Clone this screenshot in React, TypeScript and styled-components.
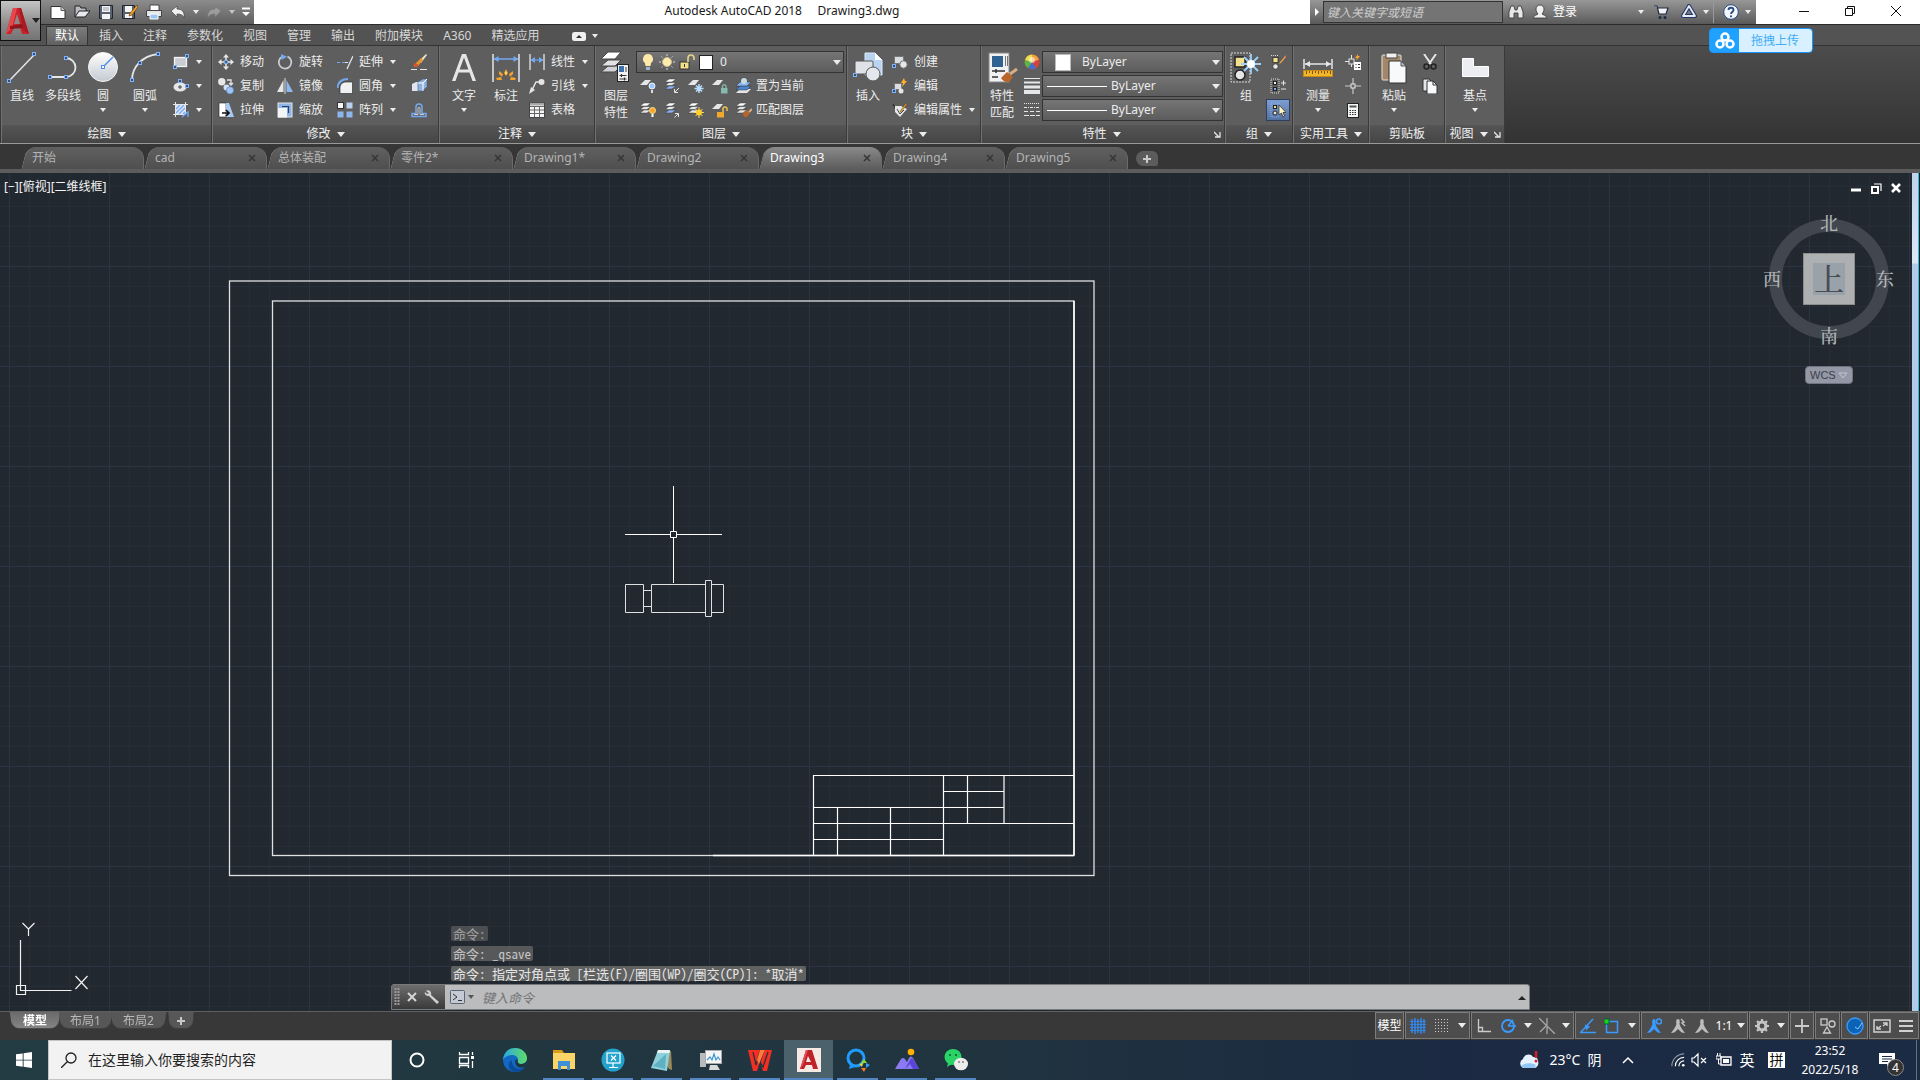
import React from 'react';
import styled, { createGlobalStyle, css } from 'styled-components';

const UI_FONT = '"Noto Sans", "Noto Sans CJK SC", sans-serif';
const MONO_FONT = '"Noto Sans Mono CJK SC", "Liberation Mono", "Noto Sans CJK SC", monospace';
const W = '#e4e6e8';
const B = '#74a9f2';

const Global = createGlobalStyle`
  * { box-sizing: border-box; }
  body { margin: 0; background: #383838; overflow: hidden; }
  button, input, select { font: inherit; color: inherit; }
`;

const Screen = styled.div`
  display: flex;
  flex-direction: column;
  height: 100vh;
  font: 12px/16px ${UI_FONT};
  color: #ececec;
  background: #383838;
`;

const plainButton = css`
  border: 0;
  padding: 0;
  margin: 0;
  background: none;
  display: flex;
  align-items: center;
  white-space: nowrap;
`;

const Icon = styled.svg`
  flex: none;
  display: block;
`;

const Caret = styled.span<{ $s?: number; $c?: string }>`
  flex: none;
  display: block;
  width: 0;
  height: 0;
  border: ${p => p.$s ?? 3}px solid transparent;
  border-top: ${p => (p.$s ?? 3) + 1}px solid ${p => p.$c ?? '#ececec'};
  border-bottom: 0;
`;

/* ---------- icons ---------- */

type IconProps = { children: React.ReactNode; w?: number; h?: number; box?: string };
const S = ({ children, w = 16, h, box }: IconProps) => (
  <Icon width={w} height={h ?? w} viewBox={box ?? `0 0 ${w} ${h ?? w}`} fill="none" aria-hidden="true">
    {children}
  </Icon>
);

const Node = ({ x, y }: { x: number; y: number }) => (
  <rect x={x - 1.5} y={y - 1.5} width="3" height="3" fill="#3d4e68" stroke="#7db3ff" />
);
const Sheets = ({ x = 0, y = 0, blue = false }: { x?: number; y?: number; blue?: boolean }) => (
  <g transform={`translate(${x} ${y})`} stroke="#3a3a3a" strokeWidth=".5">
    <path d="M0 11l4-3h7l-4 3z" fill={blue ? '#86b5f5' : W} />
    <path d="M0 7.5l4-3h7l-4 3z" fill={W} />
    <path d="M0 4l4-3h7l-4 3z" fill="#fff" />
  </g>
);
const Sheet = () => <path d="M0 7l5-5h6l-4 5z" fill={W} />;

const big = {
  line: <S w={34}><path d="M5 30L29 5" stroke={W} strokeWidth="1.5" /><Node x={4} y={31} /><Node x={29} y={4} /></S>,
  pline: <S w={34}><path d="M4 27h16a9 9 0 0 0 0-19h-1" stroke={W} strokeWidth="1.8" /><Node x={4} y={27} /><Node x={20} y={27} /><Node x={20} y={8} /></S>,
  circle: (
    <S w={34}>
      <defs><linearGradient id="disc" x1="0" y1="0" x2="0" y2="1"><stop offset="0" stopColor="#fff" /><stop offset="1" stopColor="#c4c9d2" /></linearGradient></defs>
      <circle cx="17" cy="17" r="14.5" fill="url(#disc)" stroke="#f4f4f4" />
      <path d="M17 17L27 7" stroke="#4d8fe8" strokeWidth="1.5" />
      <rect x="15.5" y="15.5" width="3" height="3" fill="#fff" stroke="#4d8fe8" />
    </S>
  ),
  arc: <S w={34}><path d="M4 30C4 17 14 6 30 4" stroke={W} strokeWidth="1.8" /><Node x={4} y={30} /><Node x={12} y={13} /><Node x={30} y={4} /></S>,
  text: <S w={34}><path d="M5 31L15 4h4l10 27h-3.500l-3-8.500h-11L8.500 31zM12.600 19.500h8.800L17 7.500z" fill={W} /></S>,
  dim: (
    <S w={34}>
      <path d="M4 4v28M30 4v28" stroke={W} strokeWidth="1.500" />
      <path d="M5 9h24" stroke={B} strokeWidth="1.500" /><path d="M4.500 9l5-3v6zM29.500 9l-5-3v6z" fill={B} />
      <g fill="#f4a229"><path d="M17 19l2 4-2 3-2-3z" /><path d="M10 21l4 3-1 3-3-3z" /><path d="M24 21l-4 3 1 3 3-3z" /><path d="M7 28l5-1 1 3H8zM27 28l-5-1-1 3h5z" /></g>
      <path d="M17 21l1 2-1 2-1-2z" fill="#ffe27a" />
    </S>
  ),
  layers: (
    <S w={34}>
      <g stroke="#444"><path d="M2 22l7-6h13l-6 6z" fill="#d0d2d5" /><path d="M2 16l7-6h13l-6 6z" fill="#e0e2e4" /><path d="M2 9l7-7h13l-6 7z" fill="#fff" /></g>
      <rect x="18.500" y="14.500" width="11" height="17" fill="#f2f2f2" stroke="#222" />
      <rect x="20" y="16" width="5" height="6" fill="#3c71b0" /><path d="M27 17v5" stroke="#444" />
      <path d="M20.500 25.500h7M20.500 29h7M22.500 24v3M25.500 27.500v3" stroke="#333" strokeWidth="1.200" />
    </S>
  ),
  insert: (
    <S w={34}>
      <path d="M14 3h10l7 7v15H14z" fill="#b9d4f3" stroke="#dfeafa" /><path d="M24 3v7h7z" fill="#fff" />
      <rect x="4" y="11" width="18" height="13" rx="1" fill="#dfe3e8" stroke="#555" />
      <circle cx="22" cy="24" r="7" fill="#e4e7eb" stroke="#555" /><Node x={4} y={25} />
    </S>
  ),
  match: (
    <S w={34}>
      <rect x="4" y="3" width="20" height="29" fill="#f0f1f3" stroke="#888" /><rect x="7" y="6" width="11" height="11" fill="#2f6291" />
      <path d="M20.500 6v10M22.500 6v10" stroke="#777" /><path d="M7 21h13M7 27h6M11 19v4" stroke="#333" strokeWidth="1.500" />
      <path d="M16 28l6-6 6 5-4 5c-3 1-6-1-8-4z" fill="#b9652a" /><path d="M25 24l7-5" stroke="#d8ad82" strokeWidth="3" />
    </S>
  ),
  group: (
    <S w={34}>
      <rect x="2" y="3" width="19" height="29" stroke="#ddd" strokeDasharray="2 1" />
      <rect x="6" y="7" width="10" height="10" fill="#f4e08c" stroke="#222" strokeWidth="1.500" />
      <circle cx="11" cy="25" r="5" fill={W} stroke="#222" strokeWidth="1.500" />
      <path d="M22 4v20M12 14h20M15 7l14 14M29 7L15 21" stroke="#9ed0ff" strokeWidth="1.800" /><circle cx="22" cy="14" r="4" fill="#fff" />
    </S>
  ),
  measure: (
    <S w={34}>
      <path d="M3 9v10M31 9v10M4 14h26" stroke={W} strokeWidth="1.500" /><path d="M4 14l5-3v6zM30 14l-5-3v6z" fill={W} />
      <rect x="2.500" y="20.500" width="29" height="6" fill="#f3b62b" stroke="#c98912" />
      <path d="M5.500 21v3M8.500 21v2M11.500 21v3M14.500 21v2M17.500 21v3M20.500 21v2M23.500 21v3M26.500 21v2M29.500 21v3" stroke="#7a5208" />
    </S>
  ),
  paste: (
    <S w={34}>
      <rect x="5" y="5" width="19" height="25" rx="1" fill="#a3876b" stroke="#e9e2d8" /><path d="M9 3h11v5H9z" fill="#f0f0f0" stroke="#444" />
      <path d="M12 11h12l5 5v17H12z" fill="#f8f9fb" stroke="#333" /><path d="M24 11v5h5z" fill="#aebdd0" stroke="#555" />
    </S>
  ),
  base: <S w={34}><path d="M4.500 8.500h11v8h15v10h-26z" fill="#eceef2" stroke="#fff" /></S>,
};

const sm = {
  rect: <S><rect x="1.500" y="3.500" width="12" height="9" fill="#c9ccd2" stroke="#f2f3f5" strokeWidth="1.300" /><Node x={2} y={13} /><Node x={14} y={2} /></S>,
  ellipse: <S><ellipse cx="7" cy="9" rx="6.500" ry="4.500" fill="#e4e6e8" /><Node x={7} y={3} /><Node x={14} y={8} /><path d="M5 9h4M7 7v4" stroke="#444" /></S>,
  hatch: <S><rect x="3" y="3" width="9" height="9" fill="#dfe8f6" /><path d="M3 7l4-4M3 11l8-8M6 12l6-6M10 12l2-2" stroke={B} strokeWidth="1.300" /><path d="M2.500 0v15M12.500 0v12M0 2.500h15M0 12.500h12" stroke={W} /><path d="M9 15l6-5v5" stroke={B} strokeWidth="1.300" /></S>,
  move: <S><path d="M8 0l3 3.500H5zM8 16l3-3.500H5zM0 8l3.500-3v6zM16 8l-3.500-3v6z" fill={W} /><path d="M8 3v3M8 10v3M3 8h3M10 8h3" stroke={W} strokeWidth="1.500" /><rect x="6.500" y="6.500" width="3" height="3" stroke={B} /></S>,
  copy: <S><circle cx="3.800" cy="3.800" r="3.700" fill={W} /><circle cx="8.500" cy="9.500" r="3" fill="#d5e2f5" /><circle cx="12" cy="12.300" r="3.600" fill="#9fc3f4" stroke="#4f7fc0" strokeWidth=".6" /><path d="M9 2h4v4M11 5l2 2 2-2" stroke={W} strokeWidth="1.300" /></S>,
  stretch: <S><path d="M1 1h7v14H1z" fill="#fff" stroke="#222" strokeWidth=".6" /><path d="M8 1h3l5 14H8z" fill="#a9c9f2" /><path d="M4 11h6M8 8l3 3-3 3" stroke="#111" strokeWidth="1.700" /></S>,
  rotate: <S><path d="M10.500 2.500A6.300 6.300 0 1 1 5 2.800" stroke="#c9ccd1" strokeWidth="1.800" /><path d="M4 0l6 2.800L4.500 6z" fill={B} /></S>,
  mirror: <S><path d="M6.500 2v12H0z" fill={W} /><path d="M9.500 2v12H16z" fill="#8fb9ee" /><path d="M8 0v16" stroke="#ddd" /></S>,
  scale: <S><rect x="1" y="1" width="14" height="14" fill="#8db5ec" stroke={W} /><rect x="1" y="6" width="9" height="9.500" fill="#f4f5f7" /><path d="M5 4.500h6.500V11" stroke="#2b3f60" strokeWidth="1.200" /></S>,
  extend: <S><path d="M0 8.500h3M5 8.500h3" stroke={B} strokeWidth="1.200" /><path d="M8 8.500h3" stroke={W} /><path d="M10 15l6-13" stroke={W} strokeWidth="1.300" /></S>,
  fillet: <S><path d="M3 15.500V10c0-4 3-6 6-6h6.500v11.500z" fill="#f0f1f3" stroke="#222" strokeWidth=".6" /><path d="M.500 10C1 4 5 1 11 1" stroke={B} strokeWidth="2" /></S>,
  array: <S><rect x=".5" y=".5" width="6" height="6" fill="#f4f5f7" stroke="#333" /><rect x="9.500" y=".5" width="6" height="6" fill="#b8cff0" /><rect x=".5" y="9.500" width="6" height="6" fill="#8db5ee" /><rect x="9.500" y="9.500" width="6" height="6" fill="#8db5ee" /></S>,
  erase: <S><path d="M15 0l1 1-6 8-2-2z" fill="#f7e2c0" /><path d="M10 4l2 2-5 6c-2 1-4 1-4 0 1-2 3-4 7-8z" fill="#e8952c" /><path d="M4 9c-2 2-2 4-1 4 2 0 3 0 5-2z" fill="#d8532c" /><path d="M0 15.500h6M9 15.500h7" stroke={W} strokeWidth="1.200" /></S>,
  explode: <S><path d="M1 6l4-2h4v9H1z" fill="#dfe6ef" /><path d="M7 4l5-3h4v8l-5 4H7z" fill="#8fb2df" stroke="#4c6b93" strokeWidth=".7" /><path d="M7 5h5v8M12 5l4-4" stroke="#fff" /></S>,
  offset: <S><path d="M1 14.500h14v-3h-4V5a3 3 0 0 0-6 0v6.500H1z" stroke={B} strokeWidth="1.500" /><path d="M3 12.500h4V6c0-1 2-1 2 0v6.500h4" stroke={W} strokeWidth=".8" /></S>,
  linear: <S><path d="M1 0v16M15 0v16" stroke={W} strokeWidth="1.300" /><path d="M2 6h12" stroke={B} /><path d="M1.500 6L6 3v6zM14.500 6L10 3v6z" fill={B} /></S>,
  leader: <S><path d="M10 4H7L3 12" stroke={W} strokeWidth="1.500" /><path d="M0 16l2-7 4 3z" fill={W} /><circle cx="12.500" cy="4" r="3" fill={W} /></S>,
  table: <S><rect x=".5" y="1" width="15" height="14.500" fill="#f4f5f6" stroke="#444" /><path d="M1 2.500h14" stroke="#aaa" strokeWidth="2" /><path d="M1 4.500h14M1 8h14M1 11.500h14M5.500 4v11M10.500 4v11" stroke="#666" /></S>,
  lyOff: <S><Sheet /><circle cx="12" cy="8" r="3" fill="#9dcaf8" stroke="#e8f3ff" /><path d="M11 12h2v3h-2z" fill="#ddd" /></S>,
  lyIso: <S><Sheets x={1} blue /><path d="M15 10l-4 4M10.500 11v3.500H14" stroke={W} /></S>,
  lyFreeze: <S><Sheet /><path d="M11 6v9M6.500 10.500h9M8 7.500l6 6M14 7.500l-6 6" stroke="#b9dcff" strokeWidth="1.500" /></S>,
  lyLock: <S><Sheet /><rect x="9" y="10" width="6.500" height="5.500" fill="#86b9ad" /><path d="M10.500 10V8a1.800 1.800 0 0 1 3.500 0v2" stroke="#86b9ad" strokeWidth="1.300" /></S>,
  lySet: <S><path d="M0 15l4-4h11l-4 4z" fill={W} /><path d="M0 12l4-4h11l-4 4z" fill="#4b86d4" stroke="#333" strokeWidth=".5" /><path d="M0 8l4-4h11l-4 4z" fill="#86b5f5" stroke="#333" strokeWidth=".5" /><circle cx="8" cy="3" r="3" fill="#c6dbe2" /></S>,
  lyOn: <S><Sheets /><circle cx="12.500" cy="8.500" r="3" fill="#f5a623" stroke="#ffdf8a" /><path d="M11.500 12h2v3h-2z" fill="#fff" /></S>,
  lyUniso: <S><Sheets x={1} blue /><path d="M10.500 15.500L14 12M11 11.500h3.500V15" stroke={W} /></S>,
  lyThaw: <S><Sheets /><path d="M11 5v11M5.500 10.500H16M7.500 7l7 7M14.500 7l-7 7" stroke="#ffd45a" /><circle cx="11" cy="10.500" r="3" fill="#ffd02e" /></S>,
  lyUnlock: <S><Sheet /><rect x="5" y="10" width="7" height="5.500" fill="#f0a92c" /><path d="M11 10V7a2 2 0 0 1 4 0v2" stroke="#f0c050" strokeWidth="1.500" /></S>,
  lyMatch: <S><Sheets /><path d="M7 11l4-3 3 3-3 4c-2 1-4-1-4-4z" fill="#b9652a" /><path d="M13 10l3-3" stroke="#d8ad82" strokeWidth="2" /></S>,
  create: <S><rect x="2.500" y="2.500" width="9" height="7" fill="#d9dde3" stroke="#777" /><circle cx="11.500" cy="10.500" r="3.700" fill={W} stroke="#777" /><Node x={2} y={12} /></S>,
  edit: <S><rect x="2.500" y="5.500" width="7" height="6" fill="#d9dde3" stroke="#777" /><circle cx="9" cy="13" r="2.500" fill={W} /><path d="M12 0l-3 5h2l-1 4 5-6h-2z" fill="#ffb12e" /><Node x={2} y={13} /></S>,
  attr: <S><path d="M1 2l2 4" stroke="#222" /><path d="M3 4h6l6 3-7 8-5-5z" fill={W} /><path d="M5 7l3 5 4-4" stroke="#444" /><path d="M14 1l-5 7-1 2 2-1 5-7z" fill="#f0a12c" stroke="#5a3200" strokeWidth=".4" /></S>,
  wheel: <S><circle cx="8" cy="8" r="7.500" fill="#d84b3a" /><path d="M8 8L8 .5A7.500 7.500 0 0 1 15 6z" fill="#f7a13c" /><path d="M8 8l7-2a7.500 7.500 0 0 1-3 8z" fill="#d6433c" /><path d="M8 8l4 6a7.500 7.500 0 0 1-8 0z" fill="#3f6fd0" /><path d="M8 8l-4 6a7.500 7.500 0 0 1-3-8z" fill="#58b548" /><path d="M8 8L1 6A7.500 7.500 0 0 1 8 .5z" fill="#e9e04d" /><circle cx="8" cy="6" r="3" fill="#fff" opacity=".55" /></S>,
  lweight: <S><path d="M0 .5h16" stroke={W} /><path d="M0 4.500h16" stroke={W} strokeWidth="2" /><path d="M0 9h16" stroke={W} strokeWidth="3" /><path d="M0 14h16" stroke={W} strokeWidth="4" /></S>,
  ltype: <S><path d="M0 1.500h16" stroke={W} strokeDasharray="1 1" /><path d="M0 5.500h16" stroke={W} strokeDasharray="3 1 1 1" /><path d="M0 9.500h16" stroke={W} strokeDasharray="4 2" /><path d="M0 13.500h16" stroke={W} strokeDasharray="5 1" /></S>,
  grpEdit: <S><path d="M1 1.500h8" stroke="#ddd" strokeDasharray="1 1" /><rect x="3" y="3.500" width="5" height="5" fill="#f4e08c" stroke="#222" strokeWidth=".7" /><circle cx="5.500" cy="12.500" r="2.700" fill={W} stroke="#222" strokeWidth=".7" /><path d="M15 2l-5 6-1 2 2-1 5-6z" fill="#e9a13c" /><path d="M15 2l1 1" stroke="#e66" strokeWidth="2" /></S>,
  grpAdd: <S><rect x="1" y="1" width="8" height="14" stroke="#ddd" strokeDasharray="1 1" /><rect x="3.500" y="3.500" width="3" height="3" fill="#f0f0f0" stroke="#222" /><rect x="3.500" y="9.500" width="3" height="3" fill="#7fb0ee" stroke="#222" /><path d="M11 5h5M13.500 2.500v5M11 11h5" stroke={W} /></S>,
  grpSel: <S><rect x="1" y="1" width="8" height="14" stroke="#7db3ff" strokeDasharray="1 1" /><rect x="3.500" y="3.500" width="3" height="3" fill="#f4e08c" stroke="#222" /><circle cx="5" cy="11" r="2" fill={W} stroke="#222" /><path d="M9 3v10l2.500-2 1.500 4 1.500-1-1.500-3.500h3z" fill="#fff5c0" stroke="#222" strokeWidth=".7" /></S>,
  qsel: <S><rect x="4" y="5" width="5" height="5" stroke={W} /><path d="M6.500 1v4M6.500 10v3M0 7.500h4" stroke={W} /><path d="M13 0l-3 4h2l-1 3 4-5h-2z" fill="#ffa22e" /><path d="M9 8h7v8H9z" fill="#fff" /><path d="M10.500 10.500h1M13 10.500h2M10.500 13.500h1M13 13.500h2" stroke="#333" /></S>,
  point: <S><path d="M8 0v16M0 8h16" stroke="#c6c8ca" strokeWidth="1.200" /><rect x="6" y="6" width="4" height="4" fill="#666" stroke={W} /></S>,
  calc: <S><rect x="2.500" y="1.500" width="11" height="14" fill="#f4f5f6" stroke="#222" /><rect x="4.500" y="3.500" width="7" height="2" fill="#555" /><path d="M4.500 8.500h7M4.500 10.500h7M4.500 12.500h7" stroke="#333" strokeDasharray="1.500 1" /></S>,
  cut: <S><path d="M2 0l7 10M14 0L7 10" stroke={W} strokeWidth="2" /><circle cx="4.500" cy="12.500" r="2.500" stroke="#222" strokeWidth="1.500" /><circle cx="11.500" cy="12.500" r="2.500" stroke="#222" strokeWidth="1.500" /></S>,
  copyclip: <S><path d="M1 1h6l3 3v9H1z" fill={W} stroke="#333" /><path d="M5 3h6l4 4v9H5z" fill="#f8f9fb" stroke="#333" /><path d="M11 3v4h4" stroke="#333" /></S>,
};

/* ---------- title bar ---------- */

const TitleBar = styled.header`
  flex: none;
  display: flex;
  height: 24px;
  padding-left: 41px;
  background: #fff;
  color: #1a1a1a;
`;
const AppButton = styled.button`
  ${plainButton}
  position: absolute;
  z-index: 2;
  left: 0;
  top: 0;
  width: 41px;
  height: 41px;
  gap: 2px;
  padding-left: 4px;
  border: 1px solid #111;
  background: linear-gradient(#c4c4c4, #8a8a8a 60%, #747474);
`;
const QuickBar = styled.div`
  width: 213px;
  display: flex;
  align-items: center;
  padding-left: 5px;
  background: linear-gradient(#8c8c8c, #606060);
`;
const QuickButton = styled.button<{ $w?: number }>`
  ${plainButton}
  justify-content: center;
  width: ${p => p.$w ?? 24}px;
  height: 24px;
`;
const WindowTitle = styled.h1`
  flex: 1;
  margin: 0;
  font: 12px/22px ${UI_FONT};
  text-align: center;
  white-space: pre;
`;
const InfoBar = styled.div`
  display: flex;
  align-items: center;
  width: 446px;
  color: #fff;
  background: linear-gradient(#979797, #5a5a5a);
`;
const HelpSearch = styled.input`
  width: 180px;
  height: 22px;
  padding: 0 3px;
  border: 1px solid #333;
  background: #747474;
  font-style: italic;
  &::placeholder { color: #cfcfcf; opacity: 1; }
`;
const InfoButton = styled.button<{ $w: number; $start?: boolean }>`
  ${plainButton}
  justify-content: ${p => (p.$start ? 'flex-start' : 'center')};
  gap: 5px;
  width: ${p => p.$w}px;
  height: 22px;
  padding-left: ${p => (p.$start ? 4 : 0)}px;
`;
const Push = styled.span`margin-left: auto;`;
const HelpButton = styled(InfoButton)`
  border-left: 1px solid #999;
  gap: 6px;
  padding-left: 4px;
`;
const WindowButtons = styled.div`
  display: flex;
  padding-left: 25px;
  padding-right: 1px;
`;
const WindowButton = styled.button`
  ${plainButton}
  justify-content: center;
  width: 46px;
  height: 22px;
`;
const UploadButton = styled.button`
  ${plainButton}
  position: absolute;
  z-index: 3;
  top: 28px;
  right: 107px;
  width: 104px;
  height: 25px;
  border: 1px solid #1a94ff;
  border-radius: 4px;
  background: linear-gradient(90deg, #1fa1ff 29px, #d8f0ff 29px);
  color: #41adf5;
  padding-left: 5px;
  gap: 16px;
`;

function Header() {
  return (
    <TitleBar>
      <AppButton aria-label="A">
        <S w={25} h={34} box="0 0 25 34">
          <path d="M8 4h8l8 26h-7l-2-6H9l-3 6H1z" fill="#c9242b" />
          <path d="M8 4h4L7 24l-6 6z" fill="#e4474c" />
          <path d="M12 10l3 10H9z" fill="#8a8a8a" />
          <path d="M5 22l12-2 2 4-14 1z" fill="#8f161c" />
          <path d="M14 4h2l8 26-6-4z" fill="#a81b22" />
        </S>
        <Caret $s={4} $c="#222" />
      </AppButton>
      <QuickBar>
        <QuickButton aria-label="New"><S><path d="M1 2.500h10l4 4v8H1z" fill="#fff" stroke="#333" /><path d="M11 2.500v4h4" stroke="#555" fill="#ccc" /></S></QuickButton>
        <QuickButton aria-label="Open"><S><path d="M1 13V2h5l1 2h5v3" fill="#b8bcc2" stroke="#222" /><path d="M1 13l4-6h11l-5 6z" fill="#e8eaec" stroke="#222" /></S></QuickButton>
        <QuickButton aria-label="Save"><S><path d="M1.500 1.500h13v13h-13z" fill="#5a6270" stroke="#1e2530" /><path d="M4 2h8v6H4z" fill="#f4f4f4" /><path d="M4 10h8v5H4z" fill="#f4f4f4" /><path d="M5 4h6M5 6h6" stroke="#99a" /></S></QuickButton>
        <QuickButton aria-label="Save as"><S><path d="M.5 1.500h12v13h-12z" fill="#5a6270" stroke="#1e2530" /><path d="M3 2h7v6H3zM3 10h7v4H3z" fill="#f4f4f4" /><path d="M15 1L8 9l-1 3 3-1 6-8z" fill="#f0a12c" stroke="#5a3200" strokeWidth=".6" /></S></QuickButton>
        <QuickButton aria-label="Print"><S><path d="M4 1h9v6H4z" fill="#fff" stroke="#444" /><path d="M.500 6.500h15v6H.500z" fill="#e4e5e7" stroke="#444" /><path d="M4 10h8v5H4z" fill="#9dc3f0" stroke="#fff" /></S></QuickButton>
        <QuickButton aria-label="Undo"><S><path d="M1 7l6-5v3c5 0 8 3 7 9-1-3-3-4-7-4v3z" fill="#f1f1f1" stroke="#444" strokeWidth=".7" /></S></QuickButton>
        <QuickButton $w={12} aria-label="Undo list"><Caret /></QuickButton>
        <QuickButton aria-label="Redo"><S><path d="M15 7L9 2v3C4 5 1 8 2 14c1-3 3-4 7-4v3z" fill="#9c9c9c" stroke="#777" strokeWidth=".7" /></S></QuickButton>
        <QuickButton $w={12} aria-label="Redo list"><Caret $c="#c4c4c4" /></QuickButton>
        <QuickButton $w={16} aria-label="Customize"><S w={10} h={10}><path d="M1 1.500h8" stroke="#fff" strokeWidth="2" /><path d="M1 5h8L5 9z" fill="#fff" /></S></QuickButton>
      </QuickBar>
      <WindowTitle>{'Autodesk AutoCAD 2018     Drawing3.dwg'}</WindowTitle>
      <InfoBar>
        <InfoButton $w={13} aria-label="Toggle search"><S w={6} h={10}><path d="M1 1l4 4-4 4z" fill="#fff" /></S></InfoButton>
        <HelpSearch aria-label="键入关键字或短语" placeholder="键入关键字或短语" />
        <InfoButton $w={25} aria-label="Search"><S><path d="M1 8l2-6h3l1 4h2l1-4h3l2 6v6h-5V9H6v5H1z" fill="#e8e8e8" stroke="#333" strokeWidth=".8" /></S></InfoButton>
        <InfoButton $w={74} $start><S><path d="M8 1c2.500 0 4 2 4 4s-1 4-2 5c1 1 4 1 5 4H1c1-3 4-3 5-4-1-1-2-3-2-5s1.500-4 4-4z" fill="#f0f0f0" stroke="#333" strokeWidth=".8" /></S>登录</InfoButton>
        <Push />
        <InfoButton $w={12} aria-label="Sign in menu"><Caret /></InfoButton>
        <InfoButton $w={28} aria-label="Cart"><S><path d="M1 2h3l2 8h7l2-6H5" fill="#f4f4f4" stroke="#1d2a44" strokeWidth="1.200" /><circle cx="7" cy="13.500" r="1.500" fill="#1d2a44" /><circle cx="12" cy="13.500" r="1.500" fill="#1d2a44" /></S></InfoButton>
        <InfoButton $w={38} aria-label="A360"><S w={18} h={16}><path d="M9 2l6 10H3z" stroke="#22386a" strokeWidth="4" strokeLinejoin="round" /><path d="M9 2l6 10H3z" stroke="#e6ebf4" strokeWidth="1.800" strokeLinejoin="round" /></S><Caret /></InfoButton>
        <HelpButton $w={43} aria-label="Help"><S><circle cx="8" cy="8" r="7.300" fill="#f4f6fa" stroke="#274b8a" /><path d="M5.500 6c0-3 5-3 5 0 0 2-2.500 2-2.500 4" stroke="#274b8a" strokeWidth="1.800" /><circle cx="8" cy="12.300" r="1.100" fill="#274b8a" /></S><Caret /></HelpButton>
      </InfoBar>
      <WindowButtons>
        <WindowButton aria-label="Minimize"><S w={12}><path d="M1 6.500h10" stroke="#111" /></S></WindowButton>
        <WindowButton aria-label="Restore"><S w={12}><path d="M1.500 3.500h7v7h-7zM3.500 3.500v-2h7v7h-2" stroke="#111" /></S></WindowButton>
        <WindowButton aria-label="Close"><S w={12}><path d="M1 1l10 10M11 1L1 11" stroke="#111" /></S></WindowButton>
      </WindowButtons>
    </TitleBar>
  );
}

/* ---------- ribbon ---------- */

const RibbonTabs = styled.nav`
  flex: none;
  display: flex;
  align-items: flex-end;
  gap: 4px;
  height: 21px;
  padding-left: 47px;
  border-top: 1px solid #2b2b2b;
  background: #535353;
`;
const RibbonTab = styled.button<{ $on?: boolean }>`
  ${plainButton}
  height: 18px;
  padding: 0 8px;
  color: ${p => (p.$on ? '#fff' : '#d6d6d6')};
  ${p => p.$on && css`
    background: linear-gradient(#7c7c7c, #606060);
    box-shadow: 0 0 0 1px #333;
  `}
`;
const TabsToggle = styled(RibbonTab)`
  padding-left: 21px;
  gap: 6px;
`;
const Ribbon = styled.section`
  flex: none;
  display: flex;
  height: 99px;
  padding-left: 1px;
  border-top: 1px solid #333;
  border-bottom: 1px solid #999;
  background: linear-gradient(#4c4c4c, #333);
`;
const Panel = styled.section<{ $w: number }>`
  flex: none;
  display: flex;
  flex-direction: column;
  width: ${p => p.$w}px;
  border-right: 1px solid #3a3a3a;
  border-left: 1px solid #707070;
  background: #5e5e5e;
`;
const PanelBody = styled.div<{ $pad?: number }>`
  flex: 1;
  display: flex;
  align-items: flex-start;
  padding: 4px 0 0 ${p => p.$pad ?? 0}px;
`;
const PanelTitle = styled.button`
  ${plainButton}
  justify-content: center;
  gap: 6px;
  height: 18px;
  background: linear-gradient(#555, #454545);
  color: #f0f0f0;
`;
const LargeButton = styled.button<{ $w: number }>`
  ${plainButton}
  flex: none;
  flex-direction: column;
  width: ${p => p.$w}px;
  line-height: 17px;
  white-space: pre-line;
  text-align: center;
`;
const LargeLabel = styled.span`
  display: block;
  padding: 3px 0 4px;
`;
const Column = styled.div<{ $w: number; $ml?: number }>`
  flex: none;
  display: flex;
  flex-direction: column;
  width: ${p => p.$w}px;
  margin-left: ${p => p.$ml ?? 0}px;
`;
const Row = styled.div`
  display: flex;
  align-items: center;
  height: 24px;
`;
const SmallButton = styled.button<{ $on?: boolean }>`
  ${plainButton}
  gap: 6px;
  height: 24px;
  ${p => p.$on && css`
    width: 24px;
    height: 22px;
    justify-content: center;
    margin: 1px 0 0 -4px;
    border: 1px solid #2e3f60;
    background: linear-gradient(#7f9ed0, #54709f);
  `}
`;
const LayerButton = styled(SmallButton)`
  padding-left: 4px;
  gap: 4px;
`;
const TinyButton = styled.button`
  ${plainButton}
  width: 24px;
  height: 24px;
  justify-content: center;
`;
const Combo = styled.label<{ $w: number }>`
  display: flex;
  align-items: center;
  gap: 4px;
  width: ${p => p.$w}px;
  height: 22px;
  padding: 0 2px 0 4px;
  border: 1px solid #333;
  background: linear-gradient(#757575, #5c5c5c);
`;
const ComboSelect = styled.select`
  flex: 1;
  min-width: 0;
  appearance: none;
  border: 0;
  padding: 0;
  background: transparent;
`;
const Swatch = styled.span`
  width: 14px;
  height: 15px;
  margin-right: 3px;
  border: 1px solid #222;
  background: #fff;
`;
const ColorSwatch = styled(Swatch)`
  width: 16px;
  height: 17px;
  margin: 0 7px 0 8px;
  border-color: #bbb;
`;
const LineSample = styled.span`
  width: 60px;
  height: 1px;
  background: #fff;
`;

type SmallItem = { icon: React.ReactNode; label?: string; name?: string; caret?: boolean; on?: boolean };
const CaretPad = styled.span`
  display: block;
  padding-left: 1px;
`;
const Small = ({ items, w, ml }: { items: SmallItem[]; w: number; ml?: number }) => (
  <Column $w={w} $ml={ml}>
    {items.map((it, i) => (
      <SmallButton key={i} $on={it.on} aria-label={it.label ? undefined : it.name}>
        {it.icon}{it.label}{it.caret && <CaretPad><Caret /></CaretPad>}
      </SmallButton>
    ))}
  </Column>
);
const Large = ({ icon, label, w, caret }: { icon: React.ReactNode; label: string; w: number; caret?: boolean }) => (
  <LargeButton $w={w}>{icon}<LargeLabel>{label}</LargeLabel>{caret && <Caret />}</LargeButton>
);
const launcher = <S w={7}><path d="M0 1l5 5M6 1v5H1" stroke="#e8e8e8" strokeWidth="1.300" /></S>;
const Title = ({ children, caret = true, launch }: { children: string; caret?: boolean; launch?: boolean }) => (
  <PanelTitle>{children}{caret && <Caret $s={4} />}{launch && launcher}</PanelTitle>
);
const LaunchTitle = styled(PanelTitle)`
  display: grid;
  grid-template-columns: 1fr auto 1fr;
  padding-right: 3px;
  & > :last-child { justify-self: end; }
`;
const TitleText = styled.span`
  display: flex;
  align-items: center;
  gap: 6px;
`;

const TABS = ['默认', '插入', '注释', '参数化', '视图', '管理', '输出', '附加模块', 'A360', '精选应用'];

function RibbonArea() {
  return (
    <>
      <RibbonTabs>
        {TABS.map((t, i) => <RibbonTab key={t} $on={i === 0}>{t}</RibbonTab>)}
        <TabsToggle aria-label="Minimize ribbon">
          <S w={14} h={9}><rect width="14" height="9" rx="2.500" fill="#f0f0f0" /><path d="M4 6h6L7 3z" fill="#333" /></S><Caret />
        </TabsToggle>
      </RibbonTabs>
      <Ribbon>
        <Panel $w={211}>
          <PanelBody>
            <Large w={40} icon={big.line} label="直线" />
            <Large w={42} icon={big.pline} label="多段线" />
            <Large w={38} icon={big.circle} label="圆" caret />
            <Large w={46} icon={big.arc} label="圆弧" caret />
            <Small w={36} ml={5} items={[{ icon: sm.rect, name: 'Rectangle', caret: true }, { icon: sm.ellipse, name: 'Ellipse', caret: true }, { icon: sm.hatch, name: 'Hatch', caret: true }]} />
          </PanelBody>
          <Title>绘图</Title>
        </Panel>
        <Panel $w={227}>
          <PanelBody $pad={5}>
            <Small w={59} items={[{ icon: sm.move, label: '移动' }, { icon: sm.copy, label: '复制' }, { icon: sm.stretch, label: '拉伸' }]} />
            <Small w={60} items={[{ icon: sm.rotate, label: '旋转' }, { icon: sm.mirror, label: '镜像' }, { icon: sm.scale, label: '缩放' }]} />
            <Small w={74} items={[{ icon: sm.extend, label: '延伸', caret: true }, { icon: sm.fillet, label: '圆角', caret: true }, { icon: sm.array, label: '阵列', caret: true }]} />
            <Small w={20} items={[{ icon: sm.erase, name: 'Erase' }, { icon: sm.explode, name: 'Explode' }, { icon: sm.offset, name: 'Offset' }]} />
          </PanelBody>
          <Title>修改</Title>
        </Panel>
        <Panel $w={156}>
          <PanelBody $pad={4}>
            <Large w={40} icon={big.text} label="文字" caret />
            <Large w={44} icon={big.dim} label="标注" />
            <Small w={60} ml={1} items={[{ icon: sm.linear, label: '线性', caret: true }, { icon: sm.leader, label: '引线', caret: true }, { icon: sm.table, label: '表格' }]} />
          </PanelBody>
          <Title>注释</Title>
        </Panel>
        <Panel $w={252}>
          <PanelBody>
            <Large w={40} icon={big.layers} label={'图层\n特性'} />
            <Column $w={208}>
              <Row>
                <Combo $w={208}>
                  <S w={14} h={18}><path d="M7 1a5 5 0 0 1 3 9l-.5 3h-5L4 10a5 5 0 0 1 3-9z" fill="#ffe9a8" /><path d="M5 14h4v3H5z" fill="#9fb3cc" /></S>
                  <S><path d="M8 0v2M8 14v2M0 8h2M14 8h2M2.500 2.500l1 1M12.500 12.500l1 1M13.500 2.500l-1 1M2.500 13.500l1-1" stroke="#d4d8dd" /><circle cx="8" cy="8" r="4.500" fill="#ffedb0" stroke="#cdb98a" /></S>
                  <S><rect x="1" y="8" width="9" height="7" fill="#f4e08c" stroke="#333" /><path d="M9 8V4a2.500 2.500 0 0 1 6 0v2" stroke="#e6d48a" strokeWidth="1.600" /><path d="M5.500 10v3" stroke="#333" /></S>
                  <Swatch />
                  <ComboSelect aria-label="Layer"><option>0</option></ComboSelect>
                  <Caret $s={4} />
                </Combo>
              </Row>
              <Row>
                {[sm.lyOff, sm.lyIso, sm.lyFreeze, sm.lyLock].map((ic, i) => <TinyButton key={i} aria-label={['Off', 'Isolate', 'Freeze', 'Lock'][i]}>{ic}</TinyButton>)}
                <LayerButton>{sm.lySet}置为当前</LayerButton>
              </Row>
              <Row>
                {[sm.lyOn, sm.lyUniso, sm.lyThaw, sm.lyUnlock].map((ic, i) => <TinyButton key={i} aria-label={['On', 'Unisolate', 'Thaw', 'Unlock'][i]}>{ic}</TinyButton>)}
                <LayerButton>{sm.lyMatch}匹配图层</LayerButton>
              </Row>
            </Column>
          </PanelBody>
          <Title>图层</Title>
        </Panel>
        <Panel $w={134}>
          <PanelBody>
            <Large w={40} icon={big.insert} label="插入" />
            <Small w={84} ml={4} items={[{ icon: sm.create, label: '创建' }, { icon: sm.edit, label: '编辑' }, { icon: sm.attr, label: '编辑属性', caret: true }]} />
          </PanelBody>
          <Title>块</Title>
        </Panel>
        <Panel $w={244}>
          <PanelBody>
            <Large w={40} icon={big.match} label={'特性\n匹配'} />
            <Column $w={18} $ml={2}><Row>{sm.wheel}</Row><Row>{sm.lweight}</Row><Row>{sm.ltype}</Row></Column>
            <Column $w={181}>
              <Row><Combo $w={181}><ColorSwatch /><ComboSelect aria-label="Color"><option>ByLayer</option></ComboSelect><Caret $s={4} /></Combo></Row>
              <Row><Combo $w={181}><LineSample /><ComboSelect aria-label="Lineweight"><option>ByLayer</option></ComboSelect><Caret $s={4} /></Combo></Row>
              <Row><Combo $w={181}><LineSample /><ComboSelect aria-label="Linetype"><option>ByLayer</option></ComboSelect><Caret $s={4} /></Combo></Row>
            </Column>
          </PanelBody>
          <LaunchTitle><span /><TitleText>特性<Caret $s={4} /></TitleText>{launcher}</LaunchTitle>
        </Panel>
        <Panel $w={68}>
          <PanelBody>
            <Large w={40} icon={big.group} label="组" />
            <Small w={20} ml={4} items={[{ icon: sm.grpEdit, name: 'Group edit' }, { icon: sm.grpAdd, name: 'Add to group' }, { icon: sm.grpSel, name: 'Group selection', on: true }]} />
          </PanelBody>
          <Title>组</Title>
        </Panel>
        <Panel $w={76}>
          <PanelBody>
            <Large w={48} icon={big.measure} label="测量" caret />
            <Small w={20} ml={3} items={[{ icon: sm.qsel, name: 'Quick select' }, { icon: sm.point, name: 'ID point' }, { icon: sm.calc, name: 'Calculator' }]} />
          </PanelBody>
          <Title>实用工具</Title>
        </Panel>
        <Panel $w={76}>
          <PanelBody>
            <Large w={48} icon={big.paste} label="粘贴" caret />
            <Small w={20} ml={4} items={[{ icon: sm.cut, name: 'Cut' }, { icon: sm.copyclip, name: 'Copy' }]} />
          </PanelBody>
          <Title caret={false}>剪贴板</Title>
        </Panel>
        <Panel $w={60}>
          <PanelBody><Large w={58} icon={big.base} label="基点" caret /></PanelBody>
          <Title launch>视图</Title>
        </Panel>
      </Ribbon>
    </>
  );
}

/* ---------- drawing tabs ---------- */

const FileTabs = styled.nav`
  flex: none;
  display: flex;
  align-items: flex-end;
  height: 29px;
  padding-left: 21px;
  border-bottom: 4px solid #5c5c5c;
  background: #363636;
`;
const FileTab = styled.div<{ $on?: boolean }>`
  position: relative;
  isolation: isolate;
  display: flex;
  align-items: center;
  justify-content: space-between;
  width: 123px;
  height: 22px;
  padding: 0 9px 0 11px;
  color: ${p => (p.$on ? '#fff' : '#b4b4b4')};
  &::before, &::after {
    content: '';
    position: absolute;
    z-index: -1;
    top: 0;
    bottom: 0;
    background: ${p => (p.$on ? 'linear-gradient(#8a8a8a, #5c5c5c)' : 'linear-gradient(#606060, #4f4f4f)')};
  }
  &::before {
    left: 3px;
    width: 60%;
    border-radius: 9px 0 0 0;
    border-left: 1px solid #777;
    transform: skewX(-14deg);
  }
  &::after {
    left: 30%;
    right: 0;
    border-radius: 0 12px 0 0;
    border-right: 1px solid #6a6a6a;
  }
`;
const FileName = styled.button`
  ${plainButton}
  height: 22px;
`;
const CloseTab = styled.button`
  ${plainButton}
  width: 10px;
`;
const AddTab = styled.button`
  ${plainButton}
  justify-content: center;
  width: 22px;
  height: 15px;
  margin: 0 0 3px 8px;
  border-radius: 8px 6px 3px 8px;
  background: #5c5c5c;
`;
const FILES = ['开始', 'cad', '总体装配', '零件2*', 'Drawing1*', 'Drawing2', 'Drawing3', 'Drawing4', 'Drawing5'];
const plus = <S w={10}><path d="M5 1v8M1 5h8" stroke="#c8c8c8" strokeWidth="2" /></S>;

/* ---------- canvas ---------- */

const Workspace = styled.div`
  flex: 1;
  min-height: 0;
  display: flex;
  background: #212830;
`;
const Canvas = styled.main`
  position: relative;
  flex: 1;
  overflow: hidden;
  background-color: #212830;
  background-image:
    linear-gradient(#2c3344 1px, transparent 1px),
    linear-gradient(90deg, #2c3344 1px, transparent 1px),
    linear-gradient(#262d37 1px, transparent 1px),
    linear-gradient(90deg, #262d37 1px, transparent 1px);
  background-size: 100px 100px, 100px 100px, 20px 20px, 20px 20px;
  background-position: 9px 93px, 9px 93px, 9px 13px, 9px 13px;
`;
const EdgeBar = styled.div`
  width: 8px;
  border-right: 1px solid #111;
  background: linear-gradient(90deg, transparent 6px, #19c6e8 6px), linear-gradient(#bfd3ec, #dbe7f6 90px, #b3cbe8 91px);
`;
const Drawing = styled.svg`
  position: absolute;
  left: 0;
  top: 0;
  width: 100%;
  height: 100%;
`;
const ViewLabel = styled.button`
  ${plainButton}
  position: absolute;
  left: 4px;
  top: 6px;
  color: #f4f4f4;
`;
const DocButtons = styled.div`
  position: absolute;
  right: 10px;
  top: 9px;
  display: flex;
  gap: 8px;
`;
const DocButton = styled.button`${plainButton}`;
const Compass = styled.svg`
  position: absolute;
  right: 12px;
  top: 36px;
  font: 500 18px "Noto Serif CJK SC", "Noto Sans CJK SC", sans-serif;
`;
const Wcs = styled.button`
  ${plainButton}
  position: absolute;
  right: 59px;
  top: 193px;
  width: 48px;
  height: 18px;
  padding: 0 4px;
  justify-content: space-between;
  border: 1px solid #71737f;
  border-radius: 4px;
  background: #9497a6;
  color: #3c4048;
  font: 11px/16px "Liberation Sans", sans-serif;
`;
const Ucs = styled.svg`
  position: absolute;
  left: 12px;
  bottom: 0;
`;
const CommandArea = styled.div`
  position: absolute;
  left: 391px;
  right: 382px;
  bottom: 1px;
  display: flex;
  flex-direction: column;
  font: 13px/15px ${MONO_FONT};
`;
const History = styled.div`
  display: flex;
  flex-direction: column;
  align-items: flex-start;
  gap: 5px;
  padding: 0 0 3px 60px;
`;
const Chip = styled.span<{ $fade: number }>`
  padding: 0 2px;
  border-radius: 2px;
  background: rgba(100, 100, 100, ${p => p.$fade});
  color: ${p => (p.$fade > 0.85 ? '#e6e6e6' : p.$fade > 0.7 ? '#c6c6c6' : '#a0a0a0')};
  white-space: pre;
`;
const CommandBar = styled.div`
  display: flex;
  align-items: center;
  height: 26px;
  border: 1px solid #77797c;
  border-radius: 3px 3px 0 0;
  background: #bbbcbe;
`;
const CommandTools = styled.div`
  display: flex;
  align-items: center;
  gap: 6px;
  width: 53px;
  height: 24px;
  padding-left: 2px;
  background: linear-gradient(#6e6e6e, #3a3a3a);
`;
const PromptButton = styled.button`
  ${plainButton}
  gap: 3px;
  padding: 0 8px 0 5px;
`;
const CommandInput = styled.input`
  flex: 1;
  border: 0;
  padding: 0;
  background: transparent;
  font-style: italic;
  color: #333;
  outline: 0;
  &::placeholder { color: #737373; opacity: 1; }
`;
const CommandMore = styled.button`
  ${plainButton}
  padding-right: 3px;
`;

function CanvasArea() {
  return (
    <Workspace>
      <Canvas>
        <Drawing fill="none" stroke="#dfe0e2" aria-hidden="true">
          <rect x="229.500" y="108" width="864.500" height="594.500" strokeWidth="1.300" />
          <rect x="272.500" y="128" width="801.500" height="554.500" strokeWidth="1.300" />
          <path d="M1074 128v554.500M713 682.500h361" stroke="#fff" strokeWidth="1.500" />
          <path d="M813.500 682V602.500H1074M943.500 602.500v80M967.500 602.500v48M1004 602.500v48M943.500 618.500H1004M813.500 634.500H1004M813.500 650.500H1074M813.500 666.500h130M837.500 634.500v48M890.500 634.500v48" stroke="#fff" strokeWidth="1.200" />
          <path d="M625.500 411.500h18v28h-18zM643.500 417.500h8M643.500 433.500h8M651.500 411.500h54v28h-54zM705.500 407.500h6v36h-6zM711.500 411.500h12v28h-12" />
          <path d="M625 361.500h45M677 361.500h45M673.500 313v45M673.500 365v45M670.500 358.500h6v6h-6z" stroke="#fff" />
        </Drawing>
        <ViewLabel>[−][俯视][二维线框]</ViewLabel>
        <DocButtons>
          <DocButton aria-label="Minimize drawing"><S w={12}><path d="M1 8h10" stroke="#fff" strokeWidth="3" /></S></DocButton>
          <DocButton aria-label="Restore drawing"><S w={12}><path d="M2 5h6v6H2z" stroke="#fff" strokeWidth="2" /><path d="M4 2h7v7" stroke="#fff" strokeWidth="1.200" /></S></DocButton>
          <DocButton aria-label="Close drawing"><S w={12}><path d="M2 2l8 8M10 2l-8 8" stroke="#fff" strokeWidth="2.600" /></S></DocButton>
        </DocButtons>
        <Compass width="142" height="142" viewBox="0 0 142 142" textAnchor="middle" fill="#b4b6b8">
          <circle cx="71" cy="70" r="53.500" fill="none" stroke="#42474f" strokeWidth="13" />
          <rect x="45.500" y="44.500" width="51" height="51" fill="#aeafb0" stroke="#8b8d8f" />
          <rect x="55" y="54" width="32" height="32" fill="#9aa2a9" />
          <text x="71" y="21">北</text><text x="71" y="134">南</text><text x="14" y="77">西</text><text x="127" y="77">东</text>
          <text x="71" y="81" fontSize="30" fill="#474c55">上</text>
        </Compass>
        <Wcs>WCS<S w={10} h={7}><path d="M1 1h8L5 6z" stroke="#c4c6d0" /></S></Wcs>
        <Ucs width="80" height="92" viewBox="0 0 80 92" fill="none" stroke="#f0f0f0" aria-hidden="true">
          <path d="M8.500 21v50.500h51M4.500 66.500h9v9h-9zM10.500 4L16.500 10v7M22.500 4L16.500 10M63.500 57l12 13M75.500 57l-12 13" strokeWidth="1.200" />
        </Ucs>
        <CommandArea>
          <History>
            <Chip $fade={0.65}>命令:</Chip>
            <Chip $fade={0.8}>命令: _qsave</Chip>
            <Chip $fade={0.95}>{'命令: 指定对角点或 [栏选(F)/圈围(WP)/圈交(CP)]: *取消*'}</Chip>
          </History>
          <CommandBar>
            <CommandTools>
              <S w={6} h={20}><path d="M1.500 1v18M4.500 1v18" stroke="#999" strokeDasharray="2 1" strokeWidth="2" /></S>
              <DocButton aria-label="Close command line"><S w={12}><path d="M2 2l8 8M10 2l-8 8" stroke="#d4d4d4" strokeWidth="2" /></S></DocButton>
              <DocButton aria-label="Customize"><S><path d="M2 2c3-2 6 1 5 4l8 7-2 2-8-8c-3 0-5-2-4-4l2 2 2-1z" fill="#d0d0d0" /></S></DocButton>
            </CommandTools>
            <PromptButton aria-label="Recent commands"><S w={15} h={14}><rect x=".5" y=".5" width="14" height="13" rx="1" fill="#c3cad4" stroke="#5b6573" /><path d="M3 4l4 3-4 3M8 10.500h4" stroke="#333" /></S><Caret $c="#555" /></PromptButton>
            <CommandInput aria-label="键入命令" placeholder="键入命令" />
            <CommandMore aria-label="History"><S w={8} h={5}><path d="M0 5l4-4 4 4z" fill="#222" /></S></CommandMore>
          </CommandBar>
        </CommandArea>
      </Canvas>
      <EdgeBar />
    </Workspace>
  );
}

/* ---------- layout tabs and status bar ---------- */

const Footer = styled.footer`
  flex: none;
  display: flex;
  justify-content: space-between;
  height: 29px;
  padding-right: 1px;
  border-top: 1px solid #606060;
  background: #383838;
`;
const LayoutTabs = styled.nav`
  display: flex;
  align-items: flex-start;
  gap: 1px;
  padding-left: 11px;
`;
const LayoutTab = styled.button<{ $on?: boolean; $w: number }>`
  ${plainButton}
  position: relative;
  isolation: isolate;
  justify-content: center;
  width: ${p => p.$w}px;
  height: 17px;
  color: ${p => (p.$on ? '#fff' : '#b8b8b8')};
  font-weight: ${p => (p.$on ? 700 : 400)};
  &::before {
    content: '';
    position: absolute;
    inset: 0;
    z-index: -1;
    border-radius: 0 0 8px 8px;
    transform: perspective(40px) rotateX(-14deg);
    background: ${p => (p.$on ? 'linear-gradient(#6a6a6a, #858585)' : '#575757')};
  }
`;
const AddLayout = styled(LayoutTab)`margin-left: 3px;`;
const StatusBar = styled.div`
  display: flex;
  gap: 1px;
`;
const StatusGroup = styled.div`
  display: flex;
  height: 27px;
  border: 1px solid #7c7c7c;
  background: #4d4d4d;
`;
const StatusButton = styled.button<{ $w?: number }>`
  ${plainButton}
  justify-content: center;
  gap: 5px;
  width: ${p => p.$w ?? 24}px;
  color: #fff;
`;
const SB = '#3a9bff';
const Person = ({ c }: { c: string }) => <path d="M8 1c2 0 2 3 1.500 5 1 3 3 6 5.500 9-3 0-4-1-5-2l-2-2-2 2c-1 1-2 2-5 2 2.500-3 4.500-6 5.500-9C6 4 6 1 8 1z" fill={c} />;

function StatusArea() {
  const caret = (w: number, name: string) => <StatusButton $w={w} aria-label={name}><Caret $s={4} /></StatusButton>;
  return (
    <Footer>
      <LayoutTabs>
        <LayoutTab $on $w={48}>模型</LayoutTab>
        <LayoutTab $w={51}>布局1</LayoutTab>
        <LayoutTab $w={53}>布局2</LayoutTab>
        <AddLayout $w={24} aria-label="New layout">{plus}</AddLayout>
      </LayoutTabs>
      <StatusBar>
        <StatusGroup><StatusButton $w={27}>模型</StatusButton></StatusGroup>
        <StatusGroup>
          <StatusButton aria-label="Grid"><S><path d="M2 1v14M5 0v16M8 1v14M11 0v16M14 1v14" stroke="#2f8fff" strokeWidth="1.300" /><path d="M0 3.500h16M0 6.500h16M0 9.500h16M0 12.500h16" stroke="#2f8fff" strokeWidth=".7" /></S></StatusButton>
          <StatusButton aria-label="Snap"><S><path d="M1 1.500h15M1 4.500h15M1 7.500h15M1 10.500h15M1 13.500h15" stroke="#ccc" strokeDasharray="1 2" /></S></StatusButton>
          {caret(15, 'Snap menu')}
        </StatusGroup>
        <StatusGroup>
          <StatusButton aria-label="Ortho"><S><path d="M2.500 1v12.500H15M2.500 9.500h4v4" stroke="#ccc" strokeWidth="1.300" /></S></StatusButton>
          <StatusButton aria-label="Polar"><S><circle cx="8" cy="8" r="6" stroke={SB} strokeWidth="1.800" /><path d="M8 8h8M8 8l5-6" stroke={SB} strokeWidth="1.500" /></S></StatusButton>
          {caret(15, 'Polar menu')}
          <StatusButton aria-label="Isodraft"><S><path d="M0 0l16 16M8 0v7M8 9v7M7 8l-6 6" stroke="#a8a8a8" strokeWidth="1.300" /></S></StatusButton>
          {caret(14, 'Isodraft menu')}
        </StatusGroup>
        <StatusGroup>
          <StatusButton aria-label="Object tracking"><S><path d="M0 14.500h16M1 14L13 1" stroke={SB} strokeWidth="1.500" /><path d="M5 6.500l5 2-4 4z" fill={SB} /></S></StatusButton>
          <StatusButton aria-label="Object snap"><S><rect x="2.500" y="3.500" width="11" height="11" stroke={SB} strokeWidth="1.500" /><rect x="0" y="1" width="5" height="5" fill="#19d219" stroke="#063" /></S></StatusButton>
          {caret(15, 'Object snap menu')}
        </StatusGroup>
        <StatusGroup>
          <StatusButton aria-label="Annotation visibility"><S><Person c={SB} /><circle cx="13" cy="3.500" r="2.500" stroke={SB} strokeWidth="1.500" /></S></StatusButton>
          <StatusButton aria-label="Auto scale"><S><Person c="#bdbdbd" /><path d="M11 1l3 3-2 1 3 3" stroke="#bdbdbd" strokeWidth="1.500" /></S></StatusButton>
          <StatusButton aria-label="Annotation"><S><Person c="#bdbdbd" /></S></StatusButton>
          <StatusButton $w={33}>1:1<Caret $s={4} /></StatusButton>
        </StatusGroup>
        <StatusGroup>
          <StatusButton aria-label="Workspace"><S w={14} box="0 0 16 16"><circle cx="8" cy="8" r="4.500" stroke="#c4c4c4" strokeWidth="3.500" /><path d="M8 0v3M8 13v3M0 8h3M13 8h3M2.300 2.300l2 2M11.700 11.700l2 2M13.700 2.300l-2 2M2.300 13.700l2-2" stroke="#c4c4c4" strokeWidth="2.500" /></S></StatusButton>
          {caret(14, 'Workspace menu')}
        </StatusGroup>
        <StatusGroup><StatusButton $w={22} aria-label="Monitor"><S><path d="M8 1v14M1 8h14" stroke="#ccc" strokeWidth="1.800" /></S></StatusButton></StatusGroup>
        <StatusGroup><StatusButton $w={23} aria-label="Isolate objects"><S><rect x="1" y="1" width="6" height="6" stroke="#ccc" strokeWidth="1.300" /><circle cx="12" cy="6" r="3" stroke="#ccc" strokeWidth="1.300" /><path d="M7 9l3.500 6h-7z" stroke="#ccc" strokeWidth="1.300" /></S></StatusButton></StatusGroup>
        <StatusGroup><StatusButton $w={25} aria-label="Graphics"><S w={18}><circle cx="9" cy="9" r="8" fill="#0b63b5" stroke={SB} strokeWidth="1.300" /><path d="M9 10l3 2 4-6" stroke="#8cc6ff" /></S></StatusButton></StatusGroup>
        <StatusGroup>
          <StatusButton aria-label="Clean screen"><S w={18} h={16}><rect x="1" y="2" width="16" height="12" stroke="#d0d0d0" strokeWidth="1.500" /><path d="M4 11l4-3M4 8v3h4M14 5l-4 3M10 5h4v3" stroke="#d0d0d0" strokeWidth="1.400" /></S></StatusButton>
          <StatusButton aria-label="Customization"><S><path d="M1 3h14M1 8h14M1 13h14" stroke="#d0d0d0" strokeWidth="2" /></S></StatusButton>
        </StatusGroup>
      </StatusBar>
    </Footer>
  );
}

/* ---------- taskbar ---------- */

const Taskbar = styled.footer`
  flex: none;
  display: flex;
  align-items: stretch;
  height: 40px;
  color: #fff;
  background: linear-gradient(90deg, #233b42, #20343f 50%, #1b2a42 75%, #1c2b44);
`;
const StartButton = styled.button`
  ${plainButton}
  justify-content: center;
  width: 48px;
`;
const TaskSearch = styled.label`
  display: flex;
  align-items: center;
  gap: 11px;
  width: 344px;
  padding-left: 12px;
  border: 1px solid #c4c4c4;
  background: #f2f2f2;
  color: #222;
`;
const TaskInput = styled.input`
  flex: 1;
  min-width: 0;
  border: 0;
  padding: 0;
  background: none;
  font-size: 14px;
  &::placeholder { color: #222; opacity: 1; }
`;
const TaskButton = styled.button<{ $open?: boolean; $on?: boolean }>`
  ${plainButton}
  justify-content: center;
  width: 49px;
  ${p => p.$open && css`
    background: linear-gradient(#5586c4, #5586c4) center bottom / 41px 2px no-repeat;
  `}
  ${p => p.$on && css`
    background: linear-gradient(#5586c4, #5586c4) center bottom / 100% 2px no-repeat, #4b616c;
  `}
`;
const Tray = styled.div`
  display: flex;
  align-items: center;
  margin-left: auto;
  padding-right: 3px;
`;
const TrayButton = styled.button<{ $w: number; $end?: boolean }>`
  ${plainButton}
  justify-content: ${p => (p.$end ? 'flex-end' : 'center')};
  gap: 9px;
  width: ${p => p.$w}px;
  height: 40px;
  font-size: 14px;
`;
const ImeButton = styled(TrayButton)`font-size: 15px;`;
const Pinyin = styled.span`
  width: 17px;
  height: 16px;
  background: #fff;
  color: #111;
  font-size: 14px;
  line-height: 15px;
  text-align: center;
`;
const Clock = styled(TrayButton)`
  flex-direction: column;
  gap: 3px;
  font-size: 12px;
`;
const Notify = styled(TrayButton)`
  position: relative;
  margin-right: 8px;
`;
const Badge = styled.span`
  position: absolute;
  right: 4px;
  bottom: 4px;
  width: 17px;
  height: 17px;
  border: 1px solid #8a8a8a;
  border-radius: 50%;
  background: #333;
  font-size: 12px;
  line-height: 15px;
  text-align: center;
`;
const ShowDesktop = styled.button`
  ${plainButton}
  width: 1px;
  height: 40px;
  background: #68727f;
`;

function TaskbarArea() {
  return (
    <Taskbar>
      <StartButton aria-label="Start"><S><path d="M0 2.300L6.700 1.400v6.300H0zM7.600 1.200L16 0v7.700H7.600zM0 8.500h6.700v6.300L0 13.800zM7.600 8.500H16V16l-8.400-1.200z" fill="#fff" /></S></StartButton>
      <TaskSearch>
        <S><circle cx="10" cy="6" r="5" stroke="#222" strokeWidth="1.300" /><path d="M6.500 9.500L0 16" stroke="#222" strokeWidth="1.300" /></S>
        <TaskInput aria-label="在这里输入你要搜索的内容" placeholder="在这里输入你要搜索的内容" />
      </TaskSearch>
      <TaskButton aria-label="Cortana"><S><circle cx="8" cy="8" r="6.500" stroke="#fff" strokeWidth="2" /></S></TaskButton>
      <TaskButton aria-label="Task view"><S><path d="M1.500 0v2.500h9V0M1.500 5.500h9v6h-9zM1.500 16v-2.500h9V16M14.500 0v3M14.500 9v7" stroke="#fff" strokeWidth="1.300" /><path d="M13 4h3v3h-3z" fill="#fff" /></S></TaskButton>
      <TaskButton aria-label="Edge">
        <S w={24}>
          <defs>
            <linearGradient id="edgeTop" x1="0" y1="0" x2="1" y2="0"><stop offset="0" stopColor="#2aa8e0" /><stop offset="1" stopColor="#5fdc68" /></linearGradient>
          </defs>
          <circle cx="12" cy="12" r="12" fill="#1169c4" />
          <path d="M0 12C1 4 6 0 12 0c7 0 12 5 12 10 0 4-3 6-6 6-2 0-4-1-3-3 1-3-2-6-6-6-4 0-8 2-9 5z" fill="url(#edgeTop)" />
          <path d="M9 12c-1 5 3 9 8 9 2 0 4-1 5-2-2 4-6 5-10 5C6 23 3 16 9 12z" fill="#0c4a9a" />
          <path d="M15 13c-1 2 1 3 3 3 2 0 5-1 6-4 0 3-1 6-2 7-2 1-5 1-7 0s-4-5-2-8z" fill="#21353f" />
        </S>
      </TaskButton>
      <TaskButton $open aria-label="Explorer"><S w={22}><path d="M0 1h9l2 3H0z" fill="#dc9a1a" /><path d="M0 4h22v16H0z" fill="#fbd468" /><path d="M5 12h12v9h-3v-4H8v4H5z" fill="#3d8fd8" /></S></TaskButton>
      <TaskButton $open aria-label="Dictionary"><S w={24}><circle cx="12" cy="12" r="11.500" fill="#23a3cc" /><rect x="6" y="5" width="13" height="10" stroke="#fff" strokeWidth="1.200" /><path d="M12 15v4M8 19.500h9M10 7.500l5 5M15 7.500l-5 5" stroke="#fff" strokeWidth="1.200" /></S></TaskButton>
      <TaskButton $open aria-label="Notepad"><S w={24}><path d="M8 2l13 1 1 19-3-1z" fill="#9a8a5a" /><path d="M8 2l12 0-3 21L1 20z" fill="#8fd0dc" /><path d="M8 2l12 0-.6 3L7 5z" fill="#e8f4f4" /><path d="M3 18L16 6l-1 15z" fill="#5fb0c0" /></S></TaskButton>
      <TaskButton $open aria-label="Monitor"><S w={24}><path d="M1 5h6v14H1z" fill="#b8bcbc" /><rect x="6.500" y="2.500" width="16" height="13" fill="#f4f6f6" stroke="#aaa" /><path d="M8 12l3-3 2 3 2-6 2 6 2-3 2 3" stroke="#3d94d0" strokeWidth="1.200" /><path d="M11 17h7l3 5H10z" fill="#d8dada" /></S></TaskButton>
      <TaskButton $open aria-label="WPS"><S w={24}><path d="M0 2h24l-5 21h-4l-3-10-3 10H5z" fill="#f22f22" /><path d="M5 4l3 13 4-14h4l-4 11 3 5L20 4" stroke="#20333e" strokeWidth="1.200" /><path d="M12 2h5l-6 14-2-4z" fill="#ff7a3c" /></S></TaskButton>
      <TaskButton $on aria-label="AutoCAD"><S w={24}><rect width="24" height="24" fill="#f7e9e4" /><path d="M9 2h6l6 19h-5l-1-4H9l-2 4H3zM11 8l-2 6h5z" fill="#bf2228" /><path d="M9 2h2L6 17l-3 4z" fill="#e05055" /></S></TaskButton>
      <TaskButton $open aria-label="Q"><S w={24}><circle cx="10" cy="10" r="8" stroke="#1e9cff" strokeWidth="3" /><path d="M4 17l-1 4 6-2" fill="#1e9cff" /><path d="M18 11l3 4h-6z" fill="#8ddc2e" /><path d="M13 16l4-1-1 4z" fill="#ffd32e" /><path d="M18 24l-3-4h5z" fill="#ff7a1e" /><path d="M24 17l-4-2v5z" fill="#2ea3ff" /></S></TaskButton>
      <TaskButton $open aria-label="M"><S w={24}><path d="M0 21L6 11q2-2 4 0l2 3 2-4q2-3 4 0l6 11H11z" fill="#8a7af2" /><path d="M10 21l5-9q1-3 3-1l6 10h-6l-3-5z" fill="#5a45d6" /><circle cx="16" cy="4" r="3.300" fill="#ffb000" /></S></TaskButton>
      <TaskButton $open aria-label="WeChat"><S w={24}><ellipse cx="9" cy="9" rx="8.500" ry="8" fill="#2ad366" /><path d="M4 15l-1 4 5-3z" fill="#2ad366" /><ellipse cx="17" cy="16" rx="7" ry="6.300" fill="#ececec" /><circle cx="6" cy="7" r="1" fill="#0b5a28" /><circle cx="12" cy="7" r="1" fill="#0b5a28" /><circle cx="15" cy="14" r=".9" fill="#777" /><circle cx="19" cy="14" r=".9" fill="#777" /></S></TaskButton>
      <Tray>
        <TrayButton $w={102}><S w={22} h={18}><path d="M5 17a5 5 0 0 1 0-9c1-5 8-6 10-2 5-1 6 5 5 8-1 2-2 3-4 3z" fill="#e4f2fd" /><path d="M3 15c3-3 10-4 15-1l-2 3H6z" fill="#8fc6f4" /><path d="M18 0v7" stroke="#d81e2a" strokeWidth="2.500" /><circle cx="18" cy="10" r="1.500" fill="#d81e2a" /></S>23°C&nbsp; 阴</TrayButton>
        <TrayButton $w={34} aria-label="Hidden icons"><S w={12} h={8}><path d="M1 7l5-5 5 5" stroke="#fff" strokeWidth="1.500" /></S></TrayButton>
        <TrayButton $w={40} $end aria-label="Network"><S w={14} box="0 0 16 16"><path d="M1 15A14 14 0 0 1 15 1" stroke="#8a94a2" strokeWidth="1.300" /><path d="M5 15A10 10 0 0 1 15 5M9 15a6 6 0 0 1 6-6" stroke="#fff" strokeWidth="1.300" /><circle cx="14" cy="14" r="1.500" fill="#fff" /></S></TrayButton>
        <TrayButton $w={28} aria-label="Volume"><S><path d="M1 6h2l4-4v12l-4-4H1zM10 6l5 5M15 6l-5 5" stroke="#fff" strokeWidth="1.200" /></S></TrayButton>
        <TrayButton $w={22} aria-label="Power"><S><path d="M5 5h10v8H5z" stroke="#fff" strokeWidth="1.300" /><path d="M7 7h6v4H7z" fill="#fff" /><path d="M0 4h5v3H0zM1.500 1v3M4 1v3M2.500 7v5H5" stroke="#fff" /></S></TrayButton>
        <ImeButton $w={24}>英</ImeButton>
        <TrayButton $w={35}><Pinyin>拼</Pinyin></TrayButton>
        <Clock $w={72}><span>23:52</span><span>2022/5/18</span></Clock>
        <Notify $w={42} aria-label="Notifications 4"><S><path d="M0 1h16v11h-5l-3 3v-3H0z" fill="#fff" /><path d="M3 4.500h10M3 7h10M3 9.500h6" stroke="#1c2b44" strokeWidth="1.200" /></S><Badge>4</Badge></Notify>
        <ShowDesktop aria-label="Show desktop" />
      </Tray>
    </Taskbar>
  );
}

export default function App() {
  return (
    <Screen>
      <Global />
      <Header />
      <UploadButton>
        <S w={20} h={18}><circle cx="10" cy="5" r="3.500" stroke="#fff" strokeWidth="2.500" /><circle cx="5" cy="12" r="3.500" stroke="#fff" strokeWidth="2.500" /><circle cx="15" cy="12" r="3.500" stroke="#fff" strokeWidth="2.500" /></S>
        拖拽上传
      </UploadButton>
      <RibbonArea />
      <FileTabs>
        {FILES.map((f, i) => (
          <FileTab key={f} $on={f === 'Drawing3'}>
            <FileName>{f}</FileName>
            {i > 0 && <CloseTab aria-label={`Close ${f}`}><S w={8}><path d="M1 1l6 6M7 1L1 7" stroke="#363636" strokeWidth="1.600" /></S></CloseTab>}
          </FileTab>
        ))}
        <AddTab aria-label="New drawing">{plus}</AddTab>
      </FileTabs>
      <CanvasArea />
      <StatusArea />
      <TaskbarArea />
    </Screen>
  );
}
